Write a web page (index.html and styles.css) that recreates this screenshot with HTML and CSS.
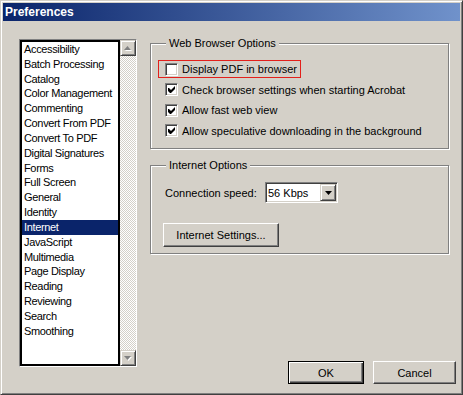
FILE: index.html
```html
<!DOCTYPE html>
<html>
<head>
  <meta charset="utf-8">
  <link rel="stylesheet" href="styles.css">
</head>
<body>
  <div class="window">
    <div class="titlebar">Preferences</div>

    <div class="client">
      <div class="listbox">
        <ul class="list">
          <li>Accessibility</li>
          <li>Batch Processing</li>
          <li>Catalog</li>
          <li>Color Management</li>
          <li>Commenting</li>
          <li>Convert From PDF</li>
          <li>Convert To PDF</li>
          <li>Digital Signatures</li>
          <li>Forms</li>
          <li>Full Screen</li>
          <li>General</li>
          <li>Identity</li>
          <li class="selected">Internet</li>
          <li>JavaScript</li>
          <li>Multimedia</li>
          <li>Page Display</li>
          <li>Reading</li>
          <li>Reviewing</li>
          <li>Search</li>
          <li>Smoothing</li>
        </ul>
        <div class="scrollbar">
          <div class="sb-btn">
            <svg width="8" height="5" viewBox="0 0 8 5"><path d="M4.5 1L8 5H1z" fill="#fff"/><path d="M3.5 0L7 4H0z" fill="#808080"/></svg>
          </div>
          <div class="sb-track"></div>
          <div class="sb-btn">
            <svg width="8" height="5" viewBox="0 0 8 5"><path d="M1 1h7L4.5 5z" fill="#fff"/><path d="M0 0h7L3.5 4z" fill="#808080"/></svg>
          </div>
        </div>
      </div>

      <div class="panel">
        <div class="group group-web">
          <span class="group-title">Web Browser Options</span>
          <label class="check marked">
            <span class="box"></span>
            Display PDF in browser
          </label>
          <label class="check">
            <span class="box"><svg width="7" height="7" viewBox="0 0 7 7"><path d="M0 2h1l2 2 4-4v3l-4 4H2L0 5z"/></svg></span>
            Check browser settings when starting Acrobat
          </label>
          <label class="check">
            <span class="box"><svg width="7" height="7" viewBox="0 0 7 7"><path d="M0 2h1l2 2 4-4v3l-4 4H2L0 5z"/></svg></span>
            Allow fast web view
          </label>
          <label class="check">
            <span class="box"><svg width="7" height="7" viewBox="0 0 7 7"><path d="M0 2h1l2 2 4-4v3l-4 4H2L0 5z"/></svg></span>
            Allow speculative downloading in the background
          </label>
        </div>

        <div class="group group-internet">
          <span class="group-title">Internet Options</span>
          <div class="field">
            <span class="field-label">Connection speed:</span>
            <div class="combo">
              <span class="combo-value">56 Kbps</span>
              <span class="combo-btn">
                <svg width="7" height="4" viewBox="0 0 7 4"><path d="M0 0h7L3.5 4z"/></svg>
              </span>
            </div>
          </div>
          <button class="btn btn-settings">Internet Settings...</button>
        </div>

        <div class="actions">
          <button class="btn btn-ok">OK</button>
          <button class="btn btn-cancel">Cancel</button>
        </div>
      </div>
    </div>
  </div>
</body>
</html>
```

FILE: styles.css
```css
* {
  box-sizing: border-box;
}

body {
  margin: 0;
  font-family: "Liberation Sans", Arial, sans-serif;
  font-size: 11px;
  color: #000;
  background-color: #d4d0c8;
}

.window {
  width: 463px;
  height: 395px;
  display: flex;
  flex-direction: column;
  padding: 2px;
  background-color: #d4d0c8;
  border: 1px solid;
  border-color: #d4d0c8 #404040 #404040 #d4d0c8;
  box-shadow: inset 1px 1px #fff, inset -1px -1px #808080;
}

.titlebar {
  height: 18px;
  padding-left: 2px;
  line-height: 18px;
  font-size: 12px;
  font-weight: bold;
  color: #fff;
  background: linear-gradient(to right, #0a246a, #7092cb);
}

.client {
  flex: 1;
  display: flex;
  align-items: stretch;
  padding: 18px 0 8px 16px;
}

/* category list */
.listbox {
  display: flex;
  width: 118px;
  height: 328px;
  border: 1px solid;
  border-color: #808080 #fff #fff #808080;
}

.list {
  flex: 1;
  margin: 0;
  padding: 0;
  list-style: none;
  overflow: hidden;
  background-color: #fff;
  border: 2px solid #000;
}

.list li {
  height: 14.83px;
  line-height: 14.83px;
  padding-left: 2px;
  letter-spacing: -0.35px;
  white-space: nowrap;
}

.list li.selected {
  background-color: #0a246a;
  color: #fff;
}

.scrollbar {
  width: 16px;
  display: flex;
  flex-direction: column;
}

.sb-track {
  flex: 1;
  background: repeating-conic-gradient(#fff 0 25%, #d4d0c8 0 50%) 0 0 / 2px 2px;
}

.sb-btn {
  height: 16px;
  display: flex;
  align-items: center;
  justify-content: center;
  background-color: #d4d0c8;
  border: 1px solid;
  border-color: #d4d0c8 #404040 #404040 #d4d0c8;
  box-shadow: inset 1px 1px #fff, inset -1px -1px #808080;
}

/* right side */
.panel {
  width: 306px;
  margin-left: 13px;
  padding-top: 4px;
  display: flex;
  flex-direction: column;
}

.group {
  position: relative;
  width: 299px;
  border: 1px solid #808080;
  box-shadow: inset 1px 1px #fff, 1px 1px #fff;
}

.group-web {
  height: 106px;
  padding: 16px 0 0 7px;
}

.group-internet {
  height: 89px;
  margin-top: 16px;
  padding: 16px 0 0 14px;
}

.group-title {
  position: absolute;
  top: -7px;
  left: 15px;
  padding: 0 3px;
  line-height: 13px;
  background-color: #d4d0c8;
}

.check {
  display: flex;
  align-items: center;
  width: fit-content;
  height: 18px;
  padding: 0 3px 0 6px;
  margin-bottom: 2.67px;
  border: 1px solid transparent;
  white-space: nowrap;
}

.check.marked {
  border-color: #e3201b;
}

.box {
  width: 13px;
  height: 13px;
  margin-right: 4px;
  display: flex;
  align-items: center;
  justify-content: center;
  background-color: #fff;
  border: 1px solid;
  border-color: #808080 #fff #fff #808080;
  box-shadow: inset 1px 1px #404040, inset -1px -1px #d4d0c8;
}

.field {
  display: flex;
  align-items: center;
  height: 21px;
}

.field-label {
  width: 100px;
}

.combo {
  width: 73px;
  height: 21px;
  display: flex;
  align-items: center;
  padding: 1px;
  background-color: #fff;
  border: 1px solid;
  border-color: #808080 #fff #fff #808080;
  box-shadow: inset 1px 1px #404040, inset -1px -1px #d4d0c8;
}

.combo-value {
  flex: 1;
  padding-left: 1px;
}

.combo-btn {
  width: 16px;
  height: 17px;
  display: flex;
  align-items: center;
  justify-content: center;
  background-color: #d4d0c8;
  border: 1px solid;
  border-color: #d4d0c8 #404040 #404040 #d4d0c8;
  box-shadow: inset 1px 1px #fff, inset -1px -1px #808080;
}

.btn {
  padding: 0;
  font: inherit;
  color: #000;
  background-color: #d4d0c8;
  border: 1px solid;
  border-color: #fff #404040 #404040 #fff;
  box-shadow: inset -1px -1px #808080;
}

.btn-settings {
  display: block;
  width: 116px;
  height: 24px;
  margin: 20px 0 0 -2px;
}

.actions {
  margin-top: auto;
  display: flex;
  justify-content: flex-end;
  gap: 9px;
}

.btn-ok {
  width: 76px;
  height: 23px;
  border: 1px solid #000;
  box-shadow: inset 1px 1px #fff, inset -1px -1px #404040, inset -2px -2px #808080;
}

.btn-cancel {
  width: 83px;
  height: 23px;
}
```
